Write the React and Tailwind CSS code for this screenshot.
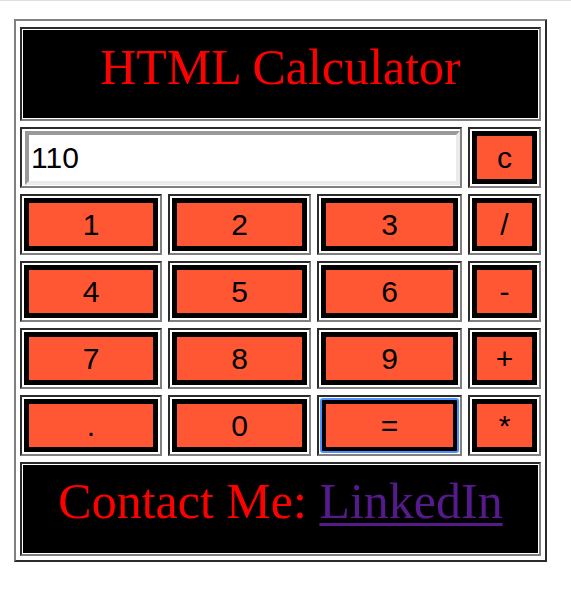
import React from "react";

const serif = "font-['Liberation_Serif','Times_New_Roman',serif]";
const sans = "font-['Liberation_Sans',Arial,sans-serif]";

const cellBorder =
  "border-2 border-t-[#2b2b2b] border-l-[#2b2b2b] border-b-[#808080] border-r-[#808080]";

const Key = ({ label, focused }) => (
  <div className={`${cellBorder} p-[2px] flex`}>
    <button
      className={`flex-1 border-[5px] border-black bg-[#ff5733] text-black text-[30px] leading-none ${sans} ${
        focused ? "outline-2 outline-[#4d90fe] -outline-offset-1 rounded-[2px]" : ""
      }`}
    >
      {label}
    </button>
  </div>
);

const rows = [
  ["1", "2", "3", "/"],
  ["4", "5", "6", "-"],
  ["7", "8", "9", "+"],
  [".", "0", "=", "*"],
];

export default function App() {
  return (
    <div className="min-h-[589px] bg-white border-t border-[#dedede]">
      <div className="ml-[14px] mt-[18px] w-[533px] border-2 border-t-[#808080] border-l-[#808080] border-b-[#2b2b2b] border-r-[#2b2b2b] pt-[6px] pb-[4px] px-[4px]">
        <div className="grid grid-cols-[142px_143px_145px_73px] grid-rows-[94px_61px_61px_61px_61px_61px_94px] gap-x-[6px] gap-y-[6px]">
          {/* title */}
          <div className={`${cellBorder} col-span-4 p-px flex`}>
            <div className="flex-1 bg-black pt-[8px] text-center">
              <h1 className={`${serif} text-[50px] leading-[58px] text-[#ff0000] font-normal`}>
                HTML Calculator
              </h1>
            </div>
          </div>

          {/* display */}
          <div className={`${cellBorder} col-span-3 pl-[3px] pt-[2px] flex items-start`}>
            <input
              readOnly
              value="110"
              className={`flex-1 min-w-0 h-[54px] bg-white border-4 border-t-[#999999] border-l-[#999999] border-b-[#ebebeb] border-r-[#ebebeb] pl-[2px] text-[30px] text-black ${sans} outline-none`}
            />
          </div>
          <Key label="c" />

          {rows.map((row) =>
            row.map((k) => <Key key={k} label={k} focused={k === "="} />)
          )}

          {/* footer */}
          <div className={`${cellBorder} col-span-4 p-px flex`}>
            <div className="flex-1 bg-black pt-[7px] text-center">
              <p className={`${serif} text-[50px] leading-[58px] text-[#ff0000]`}>
                Contact Me:{" "}
                <a
                  href="#"
                  className="text-[#551a8b] underline decoration-[3px] underline-offset-[5px]"
                >
                  LinkedIn
                </a>
              </p>
            </div>
          </div>
        </div>
      </div>
    </div>
  );
}
